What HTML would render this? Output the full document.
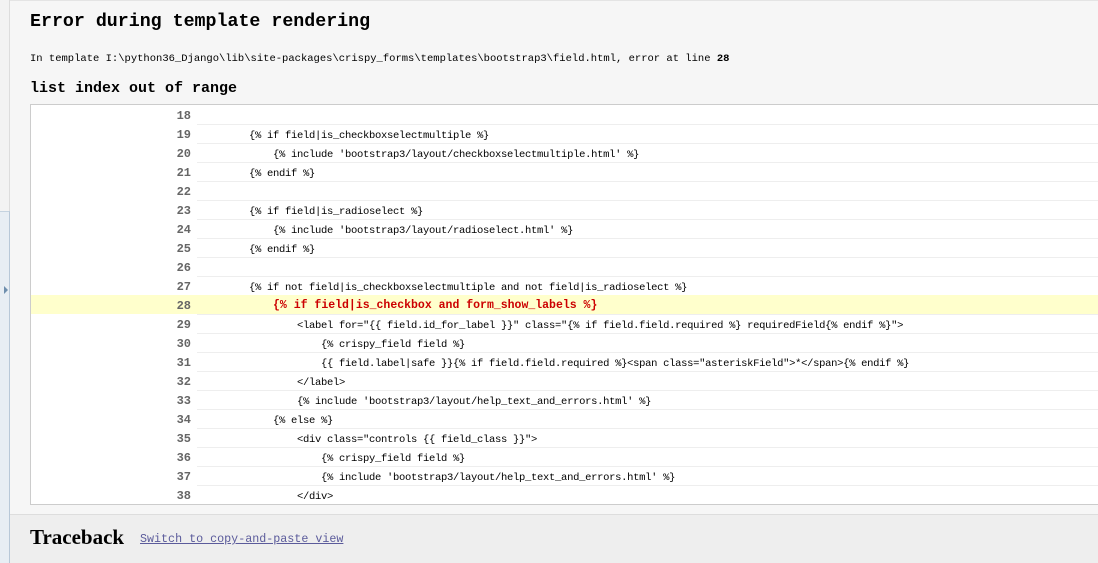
<!DOCTYPE html>
<html><head><style>
*{margin:0;padding:0;box-sizing:border-box}
body{width:1098px;height:563px;overflow:hidden;background:#f6f6f6;position:relative;font-family:"Liberation Mono",monospace;color:#000}
.strip{position:absolute;left:0;top:0;width:10px;height:563px;background:#f3f3f3;border-right:1px solid #ddd}
.strip2{position:absolute;left:0;top:211px;width:10px;height:352px;background:#e8eef4;border-top:1px solid #c5d3e0;border-right:1px solid #b8c8d8}
.arrow{position:absolute;left:4px;top:286px;width:0;height:0;border-left:4px solid #6f8fae;border-top:4px solid transparent;border-bottom:4px solid transparent}
.topl{position:absolute;left:10px;top:0;width:1088px;height:1px;background:#e4e4e4}
h1{position:absolute;left:30px;top:12px;font-size:18.3px;font-weight:bold;white-space:nowrap}
.info{position:absolute;left:30px;top:53px;font-size:10.5px;white-space:nowrap}
h2{position:absolute;left:30px;top:80px;font-size:15px;font-weight:bold;white-space:nowrap}
.box{position:absolute;left:30px;top:104px;width:1080px;height:401px;background:#fff;border:1px solid #ccc}
.row{position:absolute;left:0;width:1080px;height:19px}
.num{position:absolute;left:0;width:160px;text-align:right;font-size:12px;font-weight:bold;color:#666;top:4px}
.code{position:absolute;left:166px;right:0;top:0;height:19px;border-top:1px solid #eee;font-size:10.5px;white-space:pre;padding-left:4px;line-height:22px;letter-spacing:-0.3px}
.hl{background:#ffc}
.hl .code{color:#c00;font-weight:bold;font-size:11.5px;border-top:none;padding-left:7px;letter-spacing:0}
.bottom{position:absolute;left:10px;top:514px;width:1088px;height:49px;background:#eee;border-top:1px solid #ddd}
.tb{position:absolute;left:30px;top:525px;font-family:"Liberation Serif",serif;font-weight:bold;font-size:21px}
.lk{position:absolute;left:140px;top:532px;font-size:11.7px;color:#5b5b9b;text-decoration:underline;white-space:nowrap}
</style></head><body>
<div class="strip"></div><div class="strip2"></div><div class="arrow"></div><div class="topl"></div>
<h1>Error during template rendering</h1>
<div class="info">In template I:\python36_Django\lib\site-packages\crispy_forms\templates\bootstrap3\field.html, error at line <b>28</b></div>
<h2>list index out of range</h2>
<div class="box">
<div class="row" style="top:0"><div class="num">18</div><div class="code" style="border-top:none"></div></div>
<div class="row" style="top:19px"><div class="num">19</div><div class="code">        {% if field|is_checkboxselectmultiple %}</div></div>
<div class="row" style="top:38px"><div class="num">20</div><div class="code">            {% include 'bootstrap3/layout/checkboxselectmultiple.html' %}</div></div>
<div class="row" style="top:57px"><div class="num">21</div><div class="code">        {% endif %}</div></div>
<div class="row" style="top:76px"><div class="num">22</div><div class="code"></div></div>
<div class="row" style="top:95px"><div class="num">23</div><div class="code">        {% if field|is_radioselect %}</div></div>
<div class="row" style="top:114px"><div class="num">24</div><div class="code">            {% include 'bootstrap3/layout/radioselect.html' %}</div></div>
<div class="row" style="top:133px"><div class="num">25</div><div class="code">        {% endif %}</div></div>
<div class="row" style="top:152px"><div class="num">26</div><div class="code"></div></div>
<div class="row" style="top:171px"><div class="num">27</div><div class="code">        {% if not field|is_checkboxselectmultiple and not field|is_radioselect %}</div></div>
<div class="row hl" style="top:190px"><div class="num">28</div><div class="code">          {% if field|is_checkbox and form_show_labels %}</div></div>
<div class="row" style="top:209px"><div class="num">29</div><div class="code">                &lt;label for="{{ field.id_for_label }}" class="{% if field.field.required %} requiredField{% endif %}"&gt;</div></div>
<div class="row" style="top:228px"><div class="num">30</div><div class="code">                    {% crispy_field field %}</div></div>
<div class="row" style="top:247px"><div class="num">31</div><div class="code">                    {{ field.label|safe }}{% if field.field.required %}&lt;span class="asteriskField"&gt;*&lt;/span&gt;{% endif %}</div></div>
<div class="row" style="top:266px"><div class="num">32</div><div class="code">                &lt;/label&gt;</div></div>
<div class="row" style="top:285px"><div class="num">33</div><div class="code">                {% include 'bootstrap3/layout/help_text_and_errors.html' %}</div></div>
<div class="row" style="top:304px"><div class="num">34</div><div class="code">            {% else %}</div></div>
<div class="row" style="top:323px"><div class="num">35</div><div class="code">                &lt;div class="controls {{ field_class }}"&gt;</div></div>
<div class="row" style="top:342px"><div class="num">36</div><div class="code">                    {% crispy_field field %}</div></div>
<div class="row" style="top:361px"><div class="num">37</div><div class="code">                    {% include 'bootstrap3/layout/help_text_and_errors.html' %}</div></div>
<div class="row" style="top:380px"><div class="num">38</div><div class="code">                &lt;/div&gt;</div></div>
</div>
<div class="bottom"></div>
<div class="tb">Traceback</div>
<div class="lk">Switch to copy-and-paste view</div>
</body></html>
